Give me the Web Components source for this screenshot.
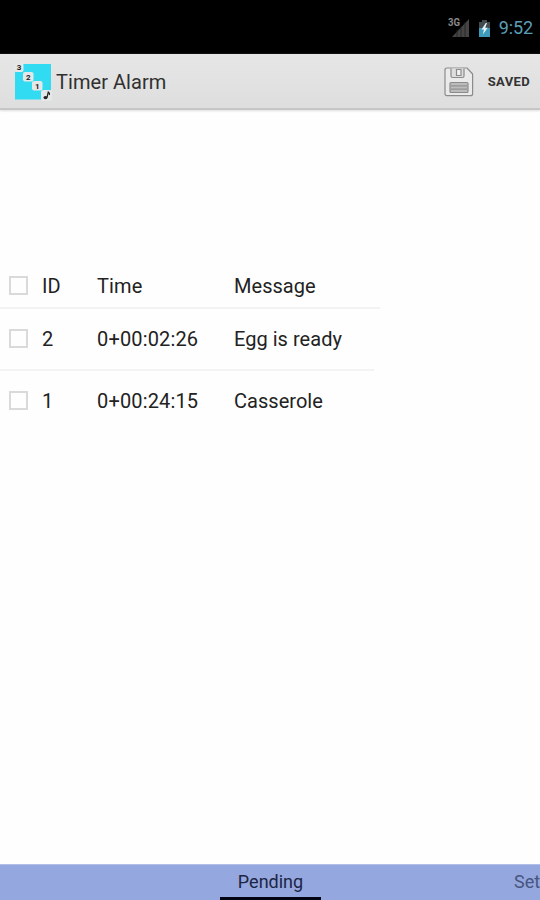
<!DOCTYPE html>
<html lang="en"><head><meta charset="utf-8"><title>Timer Alarm</title>
<style>
html,body{margin:0;height:100%}
body{font-family:Roboto,"Liberation Sans",sans-serif;color:#222;background:#fefefe;overflow:hidden}
</style></head><body>
<timer-app></timer-app>
<script>
const define=(name,html)=>customElements.define(name,class extends HTMLElement{
  constructor(){super();this.attachShadow({mode:"open"}).innerHTML=html;}
});

define("status-bar",`<style>
:host{display:flex;box-sizing:border-box;height:54px;background:#000;justify-content:flex-end;align-items:center;padding:2px 7px 0 0}
svg{display:block}.sig{margin-right:8px}.bat{margin-right:8px}
.clock{font-size:18px;line-height:20px;color:#5c9db8;letter-spacing:-.1px}
</style>
<svg class="sig" width="22" height="22" viewBox="0 0 22 22"><path d="M21 2V20H4Z" fill="#444"/><path d="M9 13V20M13 9V20M17 5V20" stroke="#222" stroke-width=".8"/><text x="0" y="8.5" font-size="10" font-weight="700" fill="#8a8a8a" stroke="#000" stroke-width="1.5" paint-order="stroke" textLength="12" lengthAdjust="spacingAndGlyphs">3G</text></svg>
<svg class="bat" width="13" height="19" viewBox="0 0 13 19"><path d="M4 1H9V3H12V18H1V3H4Z" fill="#414b50"/><path d="M1 9H12V18H1Z" fill="#3d9abb"/><path d="M7.8 4L3.5 10.5H6L4.8 15.5L9.8 8.7H7.2L9 4Z" fill="#e4f4f8"/></svg>
<span class="clock">9:52</span>`);

define("app-logo",`<style>:host{display:block;width:38px;height:38px}svg{display:block}text{font-family:Roboto,sans-serif;font-weight:700;font-size:8px;fill:#222;text-anchor:middle}</style>
<svg width="38" height="38" viewBox="0 0 38 38"><rect x="1" y="1" width="36" height="35.5" fill="#31dcf2"/>
<g fill="#e4e8e8"><rect x="0" y="0" width="9.5" height="9" rx="2"/><rect x="9" y="9" width="10.5" height="9.5" rx="2"/><rect x="18" y="18" width="10.5" height="9.5" rx="2"/><rect x="27" y="27" width="11" height="11" rx="2"/></g>
<text x="5" y="7.2">3</text><text x="14.2" y="16.7">2</text><text x="23.2" y="25.7">1</text>
<ellipse cx="31.5" cy="34.6" rx="2" ry="1.6" fill="#222"/><path d="M33 34.5L34.3 29Q36 30 35.4 32" fill="none" stroke="#222" stroke-width="1.2"/></svg>`);

define("save-icon",`<style>:host{display:block}svg{display:block}</style>
<svg width="30" height="30" viewBox="0 0 30 30" fill="none" stroke="#8b8b8b" stroke-width="1.2" stroke-linejoin="round"><path d="M3 1H23L28.6 7V26.7Q28.6 28.7 26.6 28.7H3Q1 28.7 1 26.7V3Q1 1 3 1Z" fill="#eaeaea"/><path d="M7 1.5V9Q7 10.5 8.5 10.5H18.5Q20 10.5 20 9V1.5" fill="#dedede"/><path d="M12.5 2.5H17V8.5H12.5Z" fill="#f1f1f1"/><rect x="6" y="15.5" width="18" height="10" rx="1" fill="#bcbcbc"/><path d="M7 18.8H23M7 22.2H23" stroke="#929292"/></svg>`);

define("action-bar",`<style>
:host{display:flex;align-items:center;box-sizing:border-box;height:56px;padding:1px 10px 0 14px;background:linear-gradient(#e6e6e6,#dedede);border-bottom:2px solid #c6c6c6;box-shadow:0 1px 2px #ddd}
.title{font-size:20px;line-height:24px;margin:1px 0 0 4px;letter-spacing:.05px;color:#303030;flex:1}
.action{display:flex;align-items:center;gap:14px;font-size:13px;font-weight:700;color:#333;letter-spacing:.35px}
</style><app-logo></app-logo><span class="title"><slot></slot></span><div class="action"><save-icon></save-icon><span><slot name="action"></slot></span></div>`);

define("check-box",`<style>:host{display:block;box-sizing:border-box;width:19px;height:19px;border:2px solid #dadada;background:#fefefe}</style>`);

define("alarm-row",`<style>
:host{display:grid;grid-template-columns:42px 55px 137px 1fr;align-items:center;box-sizing:border-box;width:380px;font-size:20px;line-height:24px;letter-spacing:.15px}
check-box{margin:0 0 1px 9px}
.message{letter-spacing:.03px}
</style><check-box></check-box><span><slot name="id"></slot></span><span><slot name="time"></slot></span><span class="message"><slot name="message"></slot></span>`);

define("alarm-list",`<style>
:host{display:block;padding-top:153px}
alarm-row{height:62px;border-bottom:2px solid #f3f3f3}
.head{height:46px;padding-top:1px}.second{width:374px}.last{border:0;height:60px;width:374px}
</style>
<alarm-row class="head"><span slot="id">ID</span><span slot="time">Time</span><span slot="message">Message</span></alarm-row>
<alarm-row class="second"><span slot="id">2</span><span slot="time">0+00:02:26</span><span slot="message">Egg is ready</span></alarm-row>
<alarm-row class="last"><span slot="id">1</span><span slot="time">0+00:24:15</span><span slot="message">Casserole</span></alarm-row>`);

define("pager-tabs",`<style>
:host{display:grid;grid-template-columns:220px 101px 1fr;height:36px;background:#94a7de;border-top:1px solid #b3bfe6;box-sizing:border-box;overflow:hidden;font-size:18px;line-height:21px}
.active{box-sizing:border-box;border-bottom:3px solid #030512;text-align:center;padding-top:6px;color:#1d2545;letter-spacing:0}
.next{padding:6px 0 0 193px;color:#475580;white-space:nowrap}
</style><span></span><span class="active">Pending</span><span class="next">Set</span>`);

define("timer-app",`<style>:host{display:flex;flex-direction:column;height:900px;width:540px}alarm-list{flex:1}</style>
<status-bar></status-bar><action-bar>Timer Alarm<span slot="action">SAVED</span></action-bar><alarm-list></alarm-list><pager-tabs></pager-tabs>`);
</script></body></html>
